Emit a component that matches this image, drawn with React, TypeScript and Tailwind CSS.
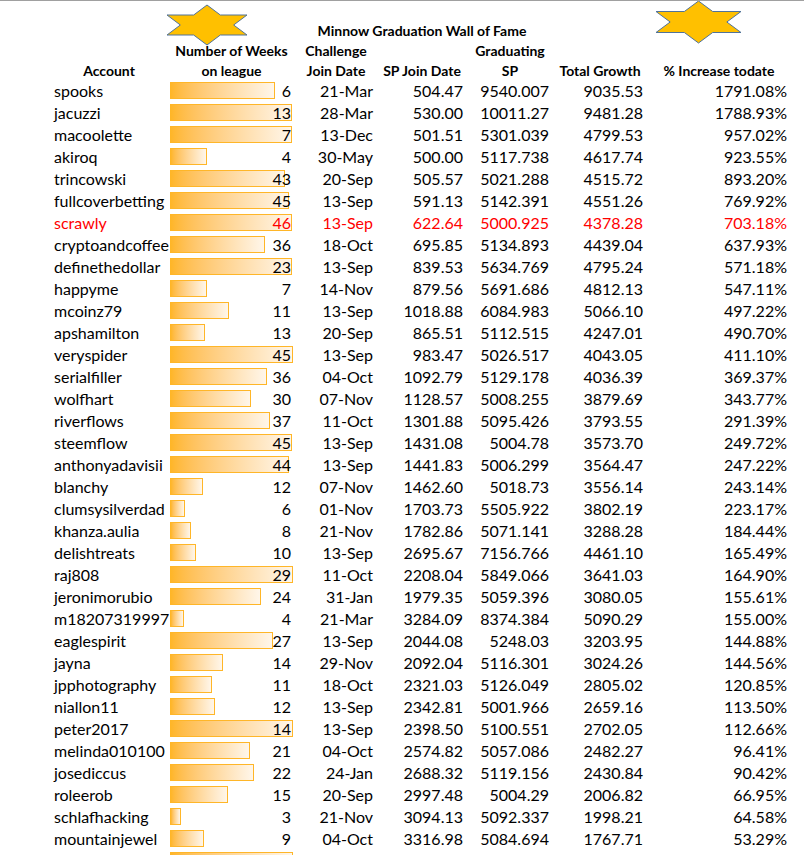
import React from "react";

type Row = [string, number, string, string, string, string, string, number];

const rows: Row[] = [
  ["spooks", 6, "21-Mar", "504.47", "9540.007", "9035.53", "1791.08%", 105],
  ["jacuzzi", 13, "28-Mar", "530.00", "10011.27", "9481.28", "1788.93%", 122],
  ["macoolette", 7, "13-Dec", "501.51", "5301.039", "4799.53", "957.02%", 122],
  ["akiroq", 4, "30-May", "500.00", "5117.738", "4617.74", "923.55%", 37],
  ["trincowski", 43, "20-Sep", "505.57", "5021.288", "4515.72", "893.20%", 115],
  ["fullcoverbetting", 45, "13-Sep", "591.13", "5142.391", "4551.26", "769.92%", 119],
  ["scrawly", 46, "13-Sep", "622.64", "5000.925", "4378.28", "703.18%", 122],
  ["cryptoandcoffee", 36, "18-Oct", "695.85", "5134.893", "4439.04", "637.93%", 95],
  ["definethedollar", 23, "13-Sep", "839.53", "5634.769", "4795.24", "571.18%", 122],
  ["happyme", 7, "14-Nov", "879.56", "5691.686", "4812.13", "547.11%", 37],
  ["mcoinz79", 11, "13-Sep", "1018.88", "6084.983", "5066.10", "497.22%", 59],
  ["apshamilton", 13, "20-Sep", "865.51", "5112.515", "4247.01", "490.70%", 35],
  ["veryspider", 45, "13-Sep", "983.47", "5026.517", "4043.05", "411.10%", 123],
  ["serialfiller", 36, "04-Oct", "1092.79", "5129.178", "4036.39", "369.37%", 97],
  ["wolfhart", 30, "07-Nov", "1128.57", "5008.255", "3879.69", "343.77%", 81],
  ["riverflows", 37, "11-Oct", "1301.88", "5095.426", "3793.55", "291.39%", 100],
  ["steemflow", 45, "13-Sep", "1431.08", "5004.78", "3573.70", "249.72%", 122],
  ["anthonyadavisii", 44, "13-Sep", "1441.83", "5006.299", "3564.47", "247.22%", 119],
  ["blanchy", 12, "07-Nov", "1462.60", "5018.73", "3556.14", "243.14%", 33],
  ["clumsysilverdad", 6, "01-Nov", "1703.73", "5505.922", "3802.19", "223.17%", 15],
  ["khanza.aulia", 8, "21-Nov", "1782.86", "5071.141", "3288.28", "184.44%", 21],
  ["delishtreats", 10, "13-Sep", "2695.67", "7156.766", "4461.10", "165.49%", 26],
  ["raj808", 29, "11-Oct", "2208.04", "5849.066", "3641.03", "164.90%", 123],
  ["jeronimorubio", 24, "31-Jan", "1979.35", "5059.396", "3080.05", "155.61%", 91],
  ["m18207319997", 4, "21-Mar", "3284.09", "8374.384", "5090.29", "155.00%", 14],
  ["eaglespirit", 27, "13-Sep", "2044.08", "5248.03", "3203.95", "144.88%", 103],
  ["jayna", 14, "29-Nov", "2092.04", "5116.301", "3024.26", "144.56%", 53],
  ["jpphotography", 11, "18-Oct", "2321.03", "5126.049", "2805.02", "120.85%", 42],
  ["niallon11", 12, "13-Sep", "2342.81", "5001.966", "2659.16", "113.50%", 45],
  ["peter2017", 14, "13-Sep", "2398.50", "5100.551", "2702.05", "112.66%", 123],
  ["melinda010100", 21, "04-Oct", "2574.82", "5057.086", "2482.27", "96.41%", 80],
  ["josediccus", 22, "24-Jan", "2688.32", "5119.156", "2430.84", "90.42%", 84],
  ["roleerob", 15, "20-Sep", "2997.48", "5004.29", "2006.82", "66.95%", 58],
  ["schlafhacking", 3, "21-Nov", "3094.13", "5092.337", "1998.21", "64.58%", 11],
  ["mountainjewel", 9, "04-Oct", "3316.98", "5084.694", "1767.71", "53.29%", 34],
  ["", 0, "", "", "", "", "", 123],
];

function Star({ w, h, className }: { w: number; h: number; className: string }) {
  const cx = w / 2 + 1;
  const cy = h / 2 + 1;
  const rx = w / 2 / 0.866;
  const ry = h / 2;
  const pts: string[] = [];
  for (let i = 0; i < 12; i++) {
    const ang = (90 - i * 30) * (Math.PI / 180);
    const outer = i % 2 === 0;
    const fx = outer ? rx : rx / Math.sqrt(3);
    const fy = outer ? ry : ry / Math.sqrt(3);
    pts.push(`${(cx + fx * Math.cos(ang)).toFixed(2)},${(cy - fy * Math.sin(ang)).toFixed(2)}`);
  }
  return (
    <svg width={w + 2} height={h + 2} className={className}>
      <polygon points={pts.join(" ")} fill="#FFC000" stroke="#50739A" strokeWidth={1} />
    </svg>
  );
}

const cols = "grid grid-cols-[50px_118px_127px_82px_90px_86px_94px_144px]";

export default function App() {
  return (
    <div
      className="relative h-[855px] w-[804px] overflow-hidden bg-white border-t border-[#a0a0a0] text-black"
      style={{ fontFamily: "Lato, 'Open Sans', sans-serif" }}
    >
      <Star w={80} h={40} className="absolute left-[166px] top-[3px]" />
      <Star w={85} h={42} className="absolute left-[655px] top-[-1px]" />

      <div className="pt-[20px] text-[14px] font-bold leading-[20px]">
        <div className={`${cols} h-[20px]`}>
          <div className="col-start-5 flex justify-center whitespace-nowrap">Minnow Graduation Wall of Fame</div>
        </div>
        <div className={`${cols} h-[20px]`}>
          <div />
          <div />
          <div className="text-center whitespace-nowrap">Number of Weeks</div>
          <div className="text-center">Challenge</div>
          <div />
          <div className="text-center">Graduating</div>
        </div>
        <div className={`${cols} h-[19px] leading-[19px]`}>
          <div />
          <div className="text-center">Account</div>
          <div className="text-center">on league</div>
          <div className="text-center whitespace-nowrap">Join Date</div>
          <div className="text-center whitespace-nowrap">SP Join Date</div>
          <div className="text-center">SP</div>
          <div className="text-center whitespace-nowrap">Total Growth</div>
          <div className="text-center whitespace-nowrap">% Increase todate</div>
        </div>
      </div>

      <div className="flex flex-col text-[16px] leading-[22px]">
        {rows.map((r, i) => {
          const red = r[0] === "scrawly";
          return (
            <div key={i} className={`${cols} h-[22px] ${red ? "text-[#FF0000]" : "text-black"}`}>
              <div />
              <div className="pl-[4px] whitespace-nowrap">{r[0]}</div>
              <div className="grid">
                <div className="col-start-1 row-start-1 pl-[2px] pt-[2px]">
                  <div
                    className="h-[17px] border border-[#FFB628] bg-gradient-to-r from-[#FFB628] to-[#FFF6EA]"
                    style={{ width: r[7] }}
                  />
                </div>
                <div className="col-start-1 row-start-1 pr-[4px] text-right">{r[0] ? r[1] : ""}</div>
              </div>
              <div className="pr-[4px] text-right">{r[2]}</div>
              <div className="pr-[4px] text-right">{r[3]}</div>
              <div className="pr-[4px] text-right">{r[4]}</div>
              <div className="pr-[4px] text-right">{r[5]}</div>
              <div className="pr-[4px] text-right">{r[6]}</div>
            </div>
          );
        })}
      </div>
    </div>
  );
}
